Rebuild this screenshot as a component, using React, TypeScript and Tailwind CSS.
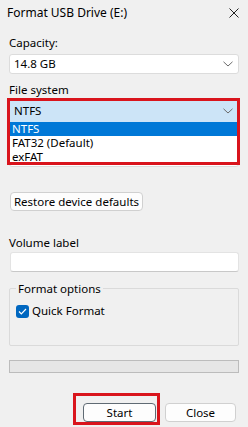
import React from "react";

const Chevron = () => (
  <svg width="10" height="6" viewBox="0 0 10 6" className="shrink-0">
    <path d="M0.5 0.8 L5 5 L9.5 0.8" fill="none" stroke="#6b6b6b" strokeWidth="1" />
  </svg>
);

export default function App() {
  return (
    <div className="w-[248px] h-[427px] overflow-hidden bg-[#f0f0f0] text-[11.5px] leading-[14px] text-black font-['Noto_Sans',sans-serif]">
      {/* title bar */}
      <div className="h-[25px] flex items-center justify-between pl-[7px] pr-[9px]">
        <span className="text-[12px]">Format USB Drive (E:)</span>
        <svg width="10" height="10" viewBox="0 0 10 10">
          <path d="M0.5 0.5 L9.5 9.5 M9.5 0.5 L0.5 9.5" stroke="#222" strokeWidth="1" />
        </svg>
      </div>

      <div className="px-[9px]">
        <div className="mt-[11px] h-[14px]">Capacity:</div>
        <div className="mt-[4px] h-[20px] flex items-center justify-between pl-[4px] pr-[5px] bg-white border border-[#dcdcdc] rounded-[3px]">
          <span>14.8 GB</span>
          <Chevron />
        </div>

        <div className="mt-[9px] h-[14px]">File system</div>

        {/* open dropdown */}
        <div className="relative mt-[2px]">
          <div className="h-[23px] flex items-center justify-between pl-[4px] pr-[5px] bg-[#cce4f7] border border-[#cce4f7]">
            <span>NTFS</span>
            <Chevron />
          </div>
          <div className="h-[45px] bg-white border border-[#dcdcdc] rounded-b-[3px]" />

          <div className="absolute left-0 right-0 top-[23px] h-[41px] bg-white flex flex-col leading-[12px]">
            <div className="h-[14px] pl-[3px] flex items-center bg-[#0078d7] text-white">NTFS</div>
            <div className="h-[14px] pl-[3px] flex items-center">FAT32 (Default)</div>
            <div className="h-[13px] pl-[3px] flex items-center">exFAT</div>
          </div>
          <div className="absolute -left-[2px] -right-[1px] -top-[1px] h-[67px] border-[3px] border-[#d9141c]" />
        </div>

        <button className="mt-[25px] ml-[1px] w-[133px] h-[19px] flex items-center justify-center bg-[#fdfdfd] border border-[#d0d0d0] rounded-[4px]">
          Restore device defaults
        </button>

        <div className="mt-[25px] h-[14px]">Volume label</div>
        <div className="mt-[2px] ml-[1px] h-[20px] bg-white border border-[#e3e3e3] border-b-[#c8c8c8] rounded-[3px]" />

        {/* group box */}
        <div className="relative mt-[16px] h-[58px] border border-[#dadada] rounded-[2px]">
          <span className="absolute left-[6px] -top-[7px] px-[2px] bg-[#f0f0f0]">Format options</span>
          <div className="flex items-center gap-[3px] pl-[6px] pt-[15px]">
            <span className="w-[13px] h-[13px] rounded-[3px] bg-[#0067c0] flex items-center justify-center">
              <svg width="9" height="7" viewBox="0 0 9 7">
                <path d="M1 3.5 L3.3 5.8 L8 1" fill="none" stroke="white" strokeWidth="1.2" />
              </svg>
            </span>
            <span>Quick Format</span>
          </div>
        </div>

        <div className="mt-[14px] h-[13px] bg-[#e6e6e6] border border-[#bcbcbc]" />

        <div className="relative mt-[30px] flex justify-end gap-[9px] pr-[3px]">
          <button className="w-[73px] h-[19px] flex items-center justify-center bg-[#fdfdfd] border border-[#5f6a73] rounded-[4px]">
            Start
          </button>
          <button className="w-[71px] h-[19px] flex items-center justify-center bg-[#fdfdfd] border border-[#d0d0d0] rounded-[4px]">
            Close
          </button>
          <div className="absolute left-[64px] top-[-10px] w-[87px] h-[32px] border-[3px] border-[#d9141c]" />
        </div>
      </div>
    </div>
  );
}
